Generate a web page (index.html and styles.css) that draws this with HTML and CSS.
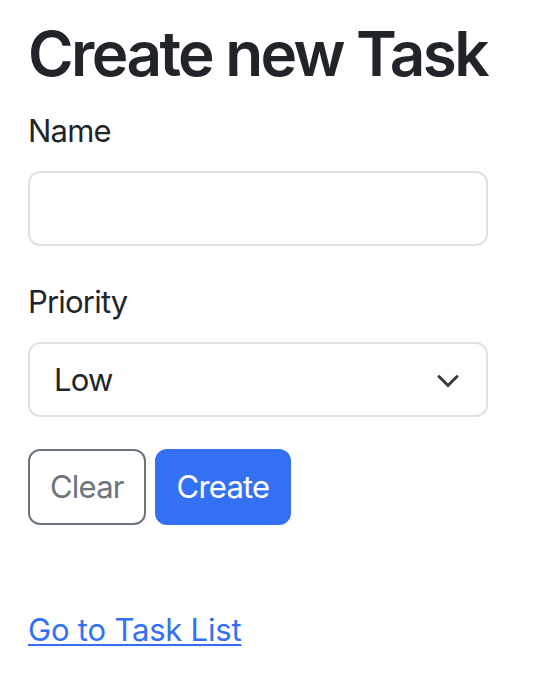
FILE: index.html
```html
<!DOCTYPE html>
<html lang="en">
<head>
<meta charset="utf-8">
<title>Create new Task</title>
<link rel="stylesheet" href="styles.css">
</head>
<body>
<main class="page">
  <h1 class="title">Create new Task</h1>
  <form class="task-form">
    <div class="field">
      <label class="field-label" for="name">Name</label>
      <input class="field-input" id="name" type="text">
    </div>
    <div class="field">
      <label class="field-label" for="priority">Priority</label>
      <div class="select-wrap">
        <select class="field-input field-select" id="priority">
          <option>Low</option>
          <option>Medium</option>
          <option>High</option>
        </select>
        <svg class="select-chevron" viewBox="0 0 16 16" width="24" height="24" aria-hidden="true">
          <path d="m2 5 6 6 6-6" fill="none" stroke="#343a40" stroke-width="2" stroke-linecap="round" stroke-linejoin="round"/>
        </svg>
      </div>
    </div>
    <div class="actions">
      <button class="btn btn-outline" type="reset">Clear</button>
      <button class="btn btn-primary" type="submit">Create</button>
    </div>
  </form>
  <a class="nav-link" href="#">Go to Task List</a>
</main>
</body>
</html>
```

FILE: styles.css
```css
* { box-sizing: border-box; }

body {
  margin: 0;
  background: #fff;
  color: #212529;
  font-family: Inter, "Noto Sans", "Liberation Sans", sans-serif;
  font-size: 31px;
  letter-spacing: -0.8px;
  line-height: 48px;
}

.page {
  width: 460px;
  margin-left: 28px;
  padding-top: 16px;
}

.title {
  margin: 0 0 15px;
  font-size: 62px;
  font-weight: 600;
  line-height: 76px;
  letter-spacing: -2.6px;
  white-space: nowrap;
}

.task-form {
  margin: 0;
}

.field {
  margin-bottom: 32px;
}

.field-label {
  display: block;
  margin-bottom: 16px;
}

.field-input {
  display: block;
  width: 100%;
  height: 75px;
  padding: 12px 24px;
  border: 2px solid #dee2e6;
  border-radius: 12px;
  background: #fff;
  color: #212529;
  font: inherit;
  letter-spacing: inherit;
  outline: none;
}

.select-wrap {
  position: relative;
}

.field-select {
  appearance: none;
  -webkit-appearance: none;
  padding-right: 72px;
}

.select-chevron {
  position: absolute;
  right: 28px;
  top: 50%;
  margin-top: -11px;
}

.actions {
  display: flex;
  gap: 9px;
}

.btn {
  height: 76px;
  padding: 12px 20px;
  border: 2px solid transparent;
  border-radius: 12px;
  font: inherit;
  letter-spacing: inherit;
  cursor: pointer;
}

.btn-outline {
  background: #fff;
  border-color: #6c757d;
  color: #6c757d;
}

.btn-primary {
  background: #3470f4;
  border-color: #3470f4;
  color: #fff;
}

.nav-link {
  display: inline-block;
  margin-top: 81px;
  color: #3470f4;
  letter-spacing: -0.2px;
  text-decoration: underline;
  text-underline-offset: 3px;
  text-decoration-thickness: 2px;
}
```
